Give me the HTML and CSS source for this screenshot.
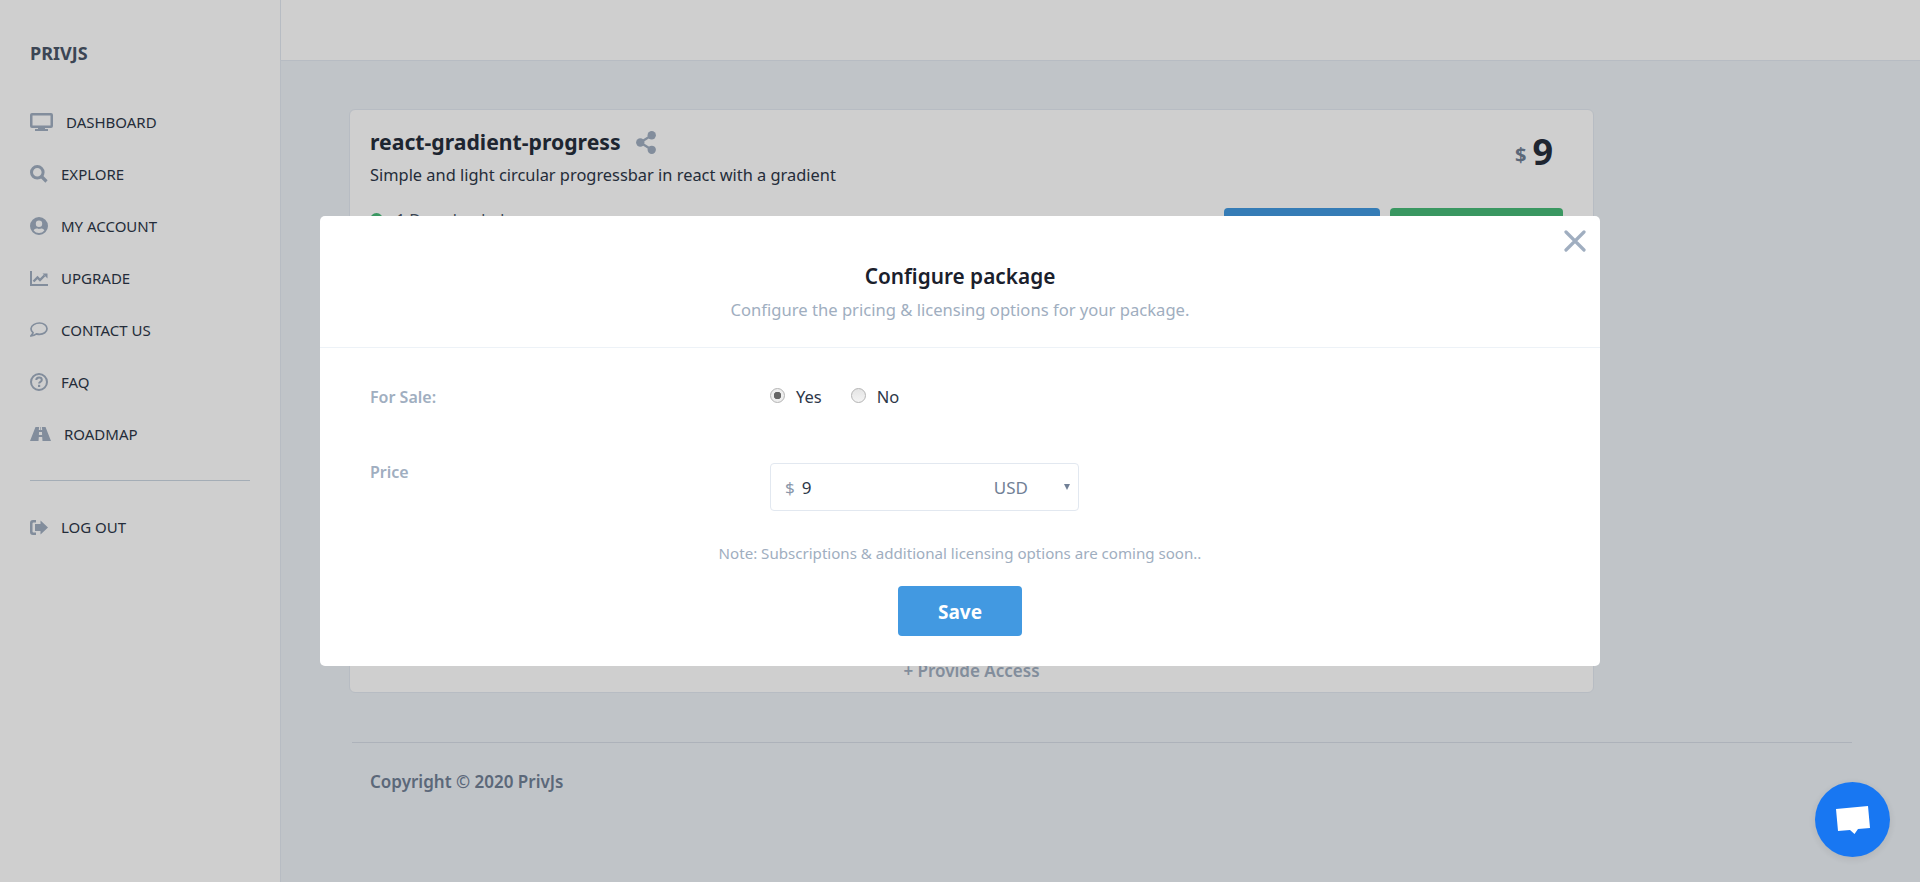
FILE: index.html
```html
<!DOCTYPE html>
<html lang="en">
<head>
    <meta charset="UTF-8">
    <meta name="viewport" content="width=device-width, initial-scale=1.0">
    <title>Configure package</title>
    <link rel="stylesheet" href="styles.css">
</head>
<body>
    <aside class="sidebar">
        <div class="brand">PRIVJS</div>
        <nav class="nav">
            <a class="nav-item">
                <svg class="nav-icon" width="23" height="18" viewBox="0 0 23 18"><path d="M2 0h19a2 2 0 0 1 2 2v11a2 2 0 0 1-2 2h-6v1h3v2H5v-2h3v-1H2a2 2 0 0 1-2-2V2a2 2 0 0 1 2-2zm.5 2.500v10h18v-10z" fill-rule="evenodd"/></svg>
                DASHBOARD
            </a>
            <a class="nav-item">
                <svg class="nav-icon" width="18" height="18" viewBox="0 0 18 18"><circle cx="7.300" cy="7.300" r="5.800" fill="none" stroke-width="3"/><path d="M11.500 11.500l5 5" fill="none" stroke-width="3.200"/></svg>
                EXPLORE
            </a>
            <a class="nav-item">
                <svg class="nav-icon" width="18" height="18" viewBox="0 0 18 18"><path fill-rule="evenodd" d="M9 0a9 9 0 1 1 0 18A9 9 0 0 1 9 0zm0 3.500a3.200 3.200 0 1 0 0 6.400 3.200 3.200 0 0 0 0-6.400zM9 16a7 7 0 0 0 5.400-2.500c-.6-1.200-1.600-2-2.800-2-.6 0-1.300.4-2.600.4s-2-.4-2.600-.4c-1.200 0-2.200.8-2.800 2A7 7 0 0 0 9 16z"/></svg>
                MY ACCOUNT
            </a>
            <a class="nav-item">
                <svg class="nav-icon" width="18" height="15" viewBox="0 0 18 15"><path d="M0 0h2v13h16v2H0z"/><path d="M3.500 10.500l4-4 2.500 2.500L14.500 4.500" fill="none" stroke-width="2.400"/><path d="M12.500 2.500H17.500V7.500z"/></svg>
                UPGRADE
            </a>
            <a class="nav-item">
                <svg class="nav-icon" width="18" height="16" viewBox="0 0 18 16"><path d="M9.500 1c4 0 7.500 2.400 7.500 5.700s-3.500 5.700-7.500 5.700c-1.100 0-2.100-.2-3-.5-1.200 1-3 1.900-5.500 2 .8-.9 1.700-2 2-3.200C2 9.800 1 8.400 1 6.700 1 3.400 5.500 1 9.500 1z" fill="none" stroke-width="1.700"/></svg>
                CONTACT US
            </a>
            <a class="nav-item">
                <svg class="nav-icon" width="18" height="18" viewBox="0 0 18 18"><circle cx="9" cy="9" r="8" fill="none" stroke-width="2"/><path d="M6.300 7c0-1.600 1.300-2.500 2.800-2.500s2.700 1 2.700 2.400c0 1.900-2.700 1.900-2.700 3.500" fill="none" stroke-width="2"/><path d="M8 11.800h2.200V14H8z"/></svg>
                FAQ
            </a>
            <a class="nav-item">
                <svg class="nav-icon" width="21" height="14" viewBox="0 0 21 14"><path d="M5.500 0h3.600L8.800 3h1.400V0h.6v3h1.400L11.900 0h3.600L21 14h-8.500l-.3-4H8.800l-.3 4H0zM9 5l-.1 3h3.200L12 5z" fill-rule="evenodd"/></svg>
                ROADMAP
            </a>
        </nav>
        <hr class="nav-rule">
        <a class="nav-item">
            <svg class="nav-icon" width="18" height="15" viewBox="0 0 18 15"><path d="M6 0v2.500H3.500a1 1 0 0 0-1 1v8a1 1 0 0 0 1 1H6V15H3a3 3 0 0 1-3-3V3a3 3 0 0 1 3-3z"/><path d="M10.500 .5L18 7.500l-7.500 7V11H5V4h5.500z"/></svg>
            LOG OUT
        </a>
    </aside>

    <div class="main">
        <header class="topbar"></header>
        <div class="content">
            <section class="card">
                <div class="card-head">
                    <div>
                        <h1 class="pkg-name">react-gradient-progress
                            <svg class="share-icon" width="22" height="25" viewBox="0 0 20 24"><circle cx="15.500" cy="5" r="4"/><circle cx="4.500" cy="12" r="4"/><circle cx="15.500" cy="19" r="4"/><path d="M15.500 5L4.500 12l11 7" fill="none" stroke-width="2.200"/></svg>
                        </h1>
                        <p class="pkg-desc">Simple and light circular progressbar in react with a gradient</p>
                    </div>
                    <div class="pkg-price"><span class="pkg-currency">$</span>9</div>
                </div>
                <div class="card-actions">
                    <div class="downloads"><span class="dot"></span>1 Downloaded</div>
                    <button class="btn btn-blue"></button>
                    <button class="btn btn-green"></button>
                </div>
                <div class="provide">+ Provide Access</div>
            </section>
            <footer class="footer">Copyright © 2020 PrivJs</footer>
        </div>
    </div>

    <div class="overlay"></div>

    <div class="modal">
        <svg class="modal-close" width="22" height="22" viewBox="0 0 22 22"><path d="M2 2l18 18M20 2L2 20" fill="none" stroke-width="3.200" stroke-linecap="round"/></svg>
        <div class="modal-head">
            <h2>Configure package</h2>
            <p>Configure the pricing &amp; licensing options for your package.</p>
        </div>
        <div class="modal-body">
            <div class="form-row row-sale">
                <label class="form-label">For Sale:</label>
                <div class="radios">
                    <label class="radio"><input type="radio" name="sale" checked> Yes</label>
                    <label class="radio"><input type="radio" name="sale"> No</label>
                </div>
            </div>
            <div class="form-row">
                <label class="form-label">Price</label>
                <div class="price-field">
                    <span class="price-symbol">$</span>
                    <span class="price-value">9</span>
                    <span class="price-unit">USD</span>
                    <span class="price-caret"></span>
                </div>
            </div>
            <p class="note">Note: Subscriptions &amp; additional licensing options are coming soon..</p>
            <button class="save-btn">Save</button>
        </div>
    </div>

    <div class="chat-btn">
        <svg width="36" height="32" viewBox="0 0 36 32"><path d="M1 5L33 2l2 22-12 1-3.500 5-4.500-4L3 27z" fill="#fff"/></svg>
    </div>
</body>
</html>
```

FILE: styles.css
```css
* {
    margin: 0;
    padding: 0;
    box-sizing: border-box;
    font-family: 'Noto Sans', 'Open Sans', sans-serif;
}

body {
    display: flex;
    height: 882px;
    overflow: hidden;
    background: #edf2f7;
    color: #2d3748;
}

.sidebar {
    width: 281px;
    flex: none;
    padding: 42px 30px 0;
    background: white;
    border-right: 1px solid #e2e8f0;
}

.brand {
    font-size: 18px;
    font-weight: 700;
    line-height: 22px;
    margin-bottom: 32px;
    color: #4a5568;
}

.nav-item {
    display: flex;
    align-items: center;
    gap: 13px;
    height: 52px;
    font-size: 15px;
    color: #2d3748;
}

.nav-icon {
    flex: none;
    fill: #a0aec0;
    stroke: #a0aec0;
    stroke-width: 0;
}

.nav-rule {
    border: none;
    border-top: 1px solid #cbd5e0;
    margin: 20px 0 20px;
}

.main {
    flex: 1;
    min-width: 0;
}

.topbar {
    height: 61px;
    background: white;
    border-bottom: 1px solid #e2e8f0;
}

.content {
    padding: 48px 68px 0 68px;
}

.card {
    display: flex;
    flex-direction: column;
    width: 1245px;
    height: 584px;
    padding: 17px 30px 0 20px;
    background: white;
    border: 1px solid #e2e8f0;
    border-radius: 6px;
}

.card-head {
    display: flex;
    justify-content: space-between;
}

.pkg-name {
    display: flex;
    align-items: center;
    gap: 14px;
    font-size: 21.200px;
    line-height: 30px;
    font-weight: 700;
    color: #262e3c;
}

.share-icon {
    fill: #a0aec0;
    stroke: #a0aec0;
    stroke-width: 0;
}

.pkg-desc {
    font-size: 16.400px;
    line-height: 24px;
    margin-top: 6px;
}

.pkg-price {
    font-size: 36px;
    line-height: 50px;
    font-weight: 700;
    color: #262e3c;
    padding-right: 10px;
}

.pkg-currency {
    font-size: 20px;
    color: #718096;
    margin-right: 6px;
    vertical-align: 3px;
}

.card-actions {
    display: flex;
    gap: 10px;
    margin-top: 21px;
}

.downloads {
    flex: 1;
    font-size: 16px;
    line-height: 24px;
    color: #4a5568;
}

.dot {
    display: inline-block;
    width: 13px;
    height: 13px;
    margin-right: 13px;
    border-radius: 50%;
    background: #48bb78;
}

.btn {
    height: 40px;
    border: none;
    border-radius: 4px;
}

.btn-blue {
    width: 156px;
    background: #4299e1;
}

.btn-green {
    width: 173px;
    background: #48bb78;
}

.provide {
    margin-top: auto;
    padding: 0 0 10px 10px;
    text-align: center;
    font-size: 17px;
    font-weight: 600;
    color: #a0aec0;
}

.footer {
    width: 1500px;
    margin: 49px 0 0 3px;
    padding: 27px 18px;
    border-top: 1px solid #d5dce5;
    font-size: 17px;
    font-weight: 600;
    color: #718096;
}

.overlay {
    position: fixed;
    inset: 0;
    background: rgba(0, 0, 0, 0.19);
}

.modal {
    position: fixed;
    left: 320px;
    top: 216px;
    width: 1280px;
    height: 450px;
    background: white;
    border-radius: 5px;
}

.modal-close {
    position: absolute;
    top: 14px;
    right: 14px;
    stroke: #a0aec0;
}

.modal-head {
    height: 132px;
    padding-top: 46px;
    text-align: center;
    border-bottom: 1px solid #edf2f7;
}

.modal-head h2 {
    font-size: 20.800px;
    line-height: 28px;
    font-weight: 600;
    color: #1a202c;
}

.modal-head p {
    margin-top: 8px;
    font-size: 16.600px;
    line-height: 24px;
    color: #a0aec0;
}

.modal-body {
    padding: 37px 50px 0;
    display: flex;
    flex-direction: column;
    align-items: center;
}

.form-row {
    display: flex;
    width: 100%;
}

.row-sale {
    height: 75px;
}

.form-label {
    width: 400px;
    font-size: 16px;
    line-height: 24px;
    font-weight: 600;
    color: #a0aec0;
}

.radios {
    display: flex;
    gap: 29px;
}

.radio {
    display: flex;
    align-items: center;
    gap: 11px;
    height: 22px;
    font-size: 16.500px;
    color: #2d3748;
}

.radio input {
    appearance: none;
    width: 15px;
    height: 15px;
    margin-top: -1px;
    border: 1px solid #b4b4b4;
    border-radius: 50%;
    background: linear-gradient(#e4e4e4, #f4f4f4);
}

.radio input:checked {
    background: radial-gradient(circle, #666 0 3.500px, #eee 4px);
}

.price-field {
    display: flex;
    align-items: center;
    width: 309px;
    height: 48px;
    margin-top: 3px;
    padding: 0 8px 0 14px;
    border: 1px solid #e2e8f0;
    border-radius: 4px;
    font-size: 17px;
}

.price-symbol {
    color: #8a97aa;
    margin-right: 7px;
}

.price-value {
    flex: 1;
}

.price-unit {
    color: #718096;
    margin-right: 36px;
}

.price-caret {
    width: 0;
    height: 0;
    border-left: 3.500px solid transparent;
    border-right: 3.500px solid transparent;
    border-top: 6px solid #718096;
}

.note {
    margin-top: 32px;
    font-size: 15.100px;
    line-height: 20px;
    color: #a0aec0;
}

.save-btn {
    width: 124px;
    height: 50px;
    margin-top: 23px;
    padding-top: 1px;
    border: none;
    border-radius: 4px;
    background: #4299e1;
    color: white;
    font-size: 19px;
    font-weight: 700;
}

.chat-btn {
    position: fixed;
    left: 1815px;
    top: 782px;
    width: 75px;
    height: 75px;
    display: flex;
    align-items: center;
    justify-content: center;
    border-radius: 50%;
    background: #1877f2;
    box-shadow: 0 2px 8px rgba(0, 0, 0, 0.1);
}
```
